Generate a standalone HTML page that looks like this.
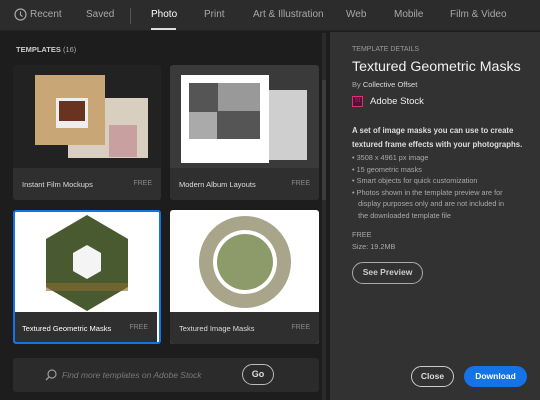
<!DOCTYPE html>
<html><head><style>
*{margin:0;padding:0;box-sizing:border-box}
body{width:540px;height:400px;overflow:hidden;background:#1d1d1d;font-family:"Liberation Sans",sans-serif;position:relative}
.top{position:absolute;left:0;top:0;width:540px;height:31px;background:#2c2c2c;border-bottom:1px solid #222}
.top span{position:absolute;top:9px;font-size:10px;color:#a8a8a8}
.abs{position:absolute}
.card{position:absolute;background:#2e2e2e;border-radius:3px;overflow:hidden}
.cap{position:absolute;left:0;bottom:0;width:100%;height:32px;background:#2f2f2f}
.cap b{position:absolute;left:9px;top:12px;font-size:7.5px;color:#ddd;font-weight:normal}
.cap i{position:absolute;right:9px;top:12px;font-size:7px;color:#8a8a8a;font-style:normal}
.rp{position:absolute;left:330px;top:32px;width:210px;height:368px;background:#323232}
.rp div{position:absolute;left:22px;white-space:nowrap}
.bul{font-size:7.3px;color:#a9a9a9;line-height:11.5px}
</style></head><body>
<div class="top">
<svg class="abs" style="left:14px;top:8px" width="13" height="13"><circle cx="6.5" cy="6.5" r="5.5" fill="none" stroke="#a8a8a8" stroke-width="1.2"/><path d="M6.5 3.5V7l2 1.5" fill="none" stroke="#a8a8a8" stroke-width="1.1"/></svg>
<span style="left:30px">Recent</span>
<span style="left:86px">Saved</span>
<div class="abs" style="left:130px;top:8px;width:1px;height:16px;background:#555"></div>
<span style="left:151px;color:#fff">Photo</span>
<div class="abs" style="left:151px;top:28px;width:25px;height:2px;background:#ddd"></div>
<span style="left:204px">Print</span>
<span style="left:253px">Art &amp; Illustration</span>
<span style="left:346px">Web</span>
<span style="left:394px">Mobile</span>
<span style="left:450px">Film &amp; Video</span>
</div>
<div class="abs" style="left:16px;top:45px;font-size:7.5px;color:#ccc;font-weight:bold">TEMPLATES <span style="font-weight:normal;color:#aaa">(16)</span></div>
<div class="abs" style="left:322px;top:33px;width:4px;height:367px;background:#2a2a2a"></div>
<div class="abs" style="left:322px;top:80px;width:4px;height:120px;background:#3b3b3b"></div>

<div class="card" style="left:13px;top:65px;width:148px;height:135px;background:#222">
 <div class="abs" style="left:55px;top:33px;width:80px;height:60px;background:#d8cfc0"></div>
 <div class="abs" style="left:22px;top:10px;width:70px;height:70px;background:#c9a676"></div>
 <div class="abs" style="left:43px;top:33px;width:32px;height:30px;background:#eee"></div>
 <div class="abs" style="left:46px;top:36px;width:26px;height:20px;background:#6a3320"></div>
 <div class="abs" style="left:96px;top:60px;width:28px;height:32px;background:#c8a0a0"></div>
 <div class="cap"><b>Instant Film Mockups</b><i>FREE</i></div>
</div>
<div class="card" style="left:170px;top:65px;width:149px;height:135px;background:#3a3a3a">
 <div class="abs" style="left:54px;top:25px;width:83px;height:70px;background:#cfcfcf"></div>
 <div class="abs" style="left:11px;top:10px;width:88px;height:88px;background:#fff"></div>
 <div class="abs" style="left:19px;top:18px;width:71px;height:56px;background:#555"></div>
 <div class="abs" style="left:48px;top:18px;width:42px;height:28px;background:#999"></div>
 <div class="abs" style="left:19px;top:47px;width:28px;height:27px;background:#aaa"></div>
 <div class="cap"><b>Modern Album Layouts</b><i>FREE</i></div>
</div>
<div class="card" style="left:13px;top:210px;width:148px;height:134px;background:#fff;border:2px solid #1473e6">
 <svg class="abs" style="left:28px;top:1px" width="88" height="100"><polygon points="44,2 85,26 85,74 44,98 3,74 3,26" fill="#4a5a30"/><polygon points="44,32 58,40 58,58 44,66 30,58 30,40" fill="#f4f4f4"/><rect x="3" y="70" width="82" height="8" fill="#8a6a30" opacity=".6"/></svg>
 <div class="cap" style="left:-2px;bottom:-2px;height:32px"><b style="color:#fff">Textured Geometric Masks</b><i>FREE</i></div>
</div>
<div class="card" style="left:170px;top:210px;width:149px;height:134px;background:#fff">
 <svg class="abs" style="left:28px;top:5px" width="94" height="94"><circle cx="47" cy="47" r="46" fill="#a9a58a"/><circle cx="47" cy="47" r="32" fill="#fff"/><circle cx="47" cy="47" r="28" fill="#8d9a6a"/></svg>
 <div class="cap"><b>Textured Image Masks</b><i>FREE</i></div>
</div>
<div class="abs" style="left:13px;top:358px;width:306px;height:34px;background:#2b2b2b;border-radius:3px">
 <svg class="abs" style="left:32px;top:11px" width="12" height="12"><circle cx="7" cy="5" r="4" fill="none" stroke="#999" stroke-width="1.2"/><path d="M4 8L1 11" stroke="#999" stroke-width="1.4"/></svg>
 <div class="abs" style="left:49px;top:12px;font-size:8.5px;color:#7a7a7a;font-style:italic">Find more templates on Adobe Stock</div>
 <div class="abs" style="left:229px;top:6px;width:32px;height:21px;border:1.5px solid #bbb;border-radius:11px;color:#ddd;font-size:9px;font-weight:bold;text-align:center;line-height:18px">Go</div>
</div>

<div class="rp">
 <div style="top:14px;font-size:7px;color:#9a9a9a">TEMPLATE DETAILS</div>
 <div style="top:27px;font-size:14.2px;color:#f2f2f2">Textured Geometric Masks</div>
 <div style="top:48px;font-size:7.5px;color:#aaa">By <span style="color:#ddd">Collective Offset</span></div>
 <div style="top:64px;width:11px;height:11px;background:#4a1530;border:1px solid #e03070;color:#f08;font-size:6px;line-height:9px;text-align:center">St</div>
 <div style="left:40px;top:64px;font-size:9.5px;color:#eee">Adobe Stock</div>
 <div style="top:92px;font-size:7.8px;color:#ddd;font-weight:bold;line-height:14px">A set of image masks you can use to create<br>textured frame effects with your photographs.</div>
 <div class="bul" style="top:120px">• 3508 x 4961 px image<br>• 15 geometric masks<br>• Smart objects for quick customization<br>• Photos shown in the template preview are for<br>&nbsp;&nbsp;&nbsp;display purposes only and are not included in<br>&nbsp;&nbsp;&nbsp;the downloaded template file</div>
 <div class="bul" style="top:197px;line-height:12px">FREE<br>Size: 19.2MB</div>
 <div style="top:230px;width:71px;height:22px;border:1.5px solid #aaa;border-radius:11px;font-size:8.5px;color:#ccc;font-weight:bold;text-align:center;line-height:19px">See Preview</div>
 <div style="left:81px;top:334px;width:43px;height:21px;border:1.5px solid #ccc;border-radius:11px;font-size:8.5px;color:#ddd;font-weight:bold;text-align:center;line-height:18px">Close</div>
 <div style="left:134px;top:334px;width:63px;height:21px;background:#1473e6;border-radius:11px;font-size:8.5px;color:#fff;font-weight:bold;text-align:center;line-height:21px">Download</div>
</div>
</body></html>
